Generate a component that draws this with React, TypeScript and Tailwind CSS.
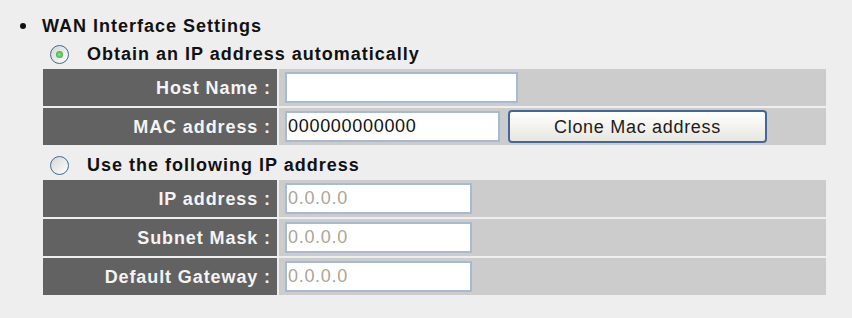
import React from "react";

type Row = {
  label: string;
  value?: string;
  width: string;
  muted?: boolean;
  button?: string;
};

const dhcpRows: Row[] = [
  { label: "Host Name :", value: "", width: "w-[233px]" },
  { label: "MAC address :", value: "000000000000", width: "w-[215px]", button: "Clone Mac address" },
];

const staticRows: Row[] = [
  { label: "IP address :", value: "0.0.0.0", width: "w-[187px]", muted: true },
  { label: "Subnet Mask :", value: "0.0.0.0", width: "w-[187px]", muted: true },
  { label: "Default Gateway :", value: "0.0.0.0", width: "w-[187px]", muted: true },
];

const Radio = ({ checked }: { checked: boolean }) => (
  <span className="flex h-[19px] w-[19px] items-center justify-center rounded-full border-[1.5px] border-[#3b6b9c] bg-linear-to-br from-[#d6d6d0] to-white">
    {checked && (
      <span className="h-[7px] w-[7px] rounded-full bg-[radial-gradient(circle,#8eea8e_0%,#1f9e2a_100%)]" />
    )}
  </span>
);

const SettingsTable = ({ rows }: { rows: Row[] }) => (
  <div className="ml-[43px] flex w-[783px] flex-col gap-[2px]">
    {rows.map((row) => (
      <div key={row.label} className="flex h-[37px] gap-[2px]">
        <div className="flex w-[234px] items-center justify-end bg-[#626262] pr-[6px] font-bold tracking-[0.9px] text-[#f4f4f4]">
          {row.label}
        </div>
        <div className="flex flex-1 items-center gap-[8px] bg-[#cccccc] pl-[6px]">
          <input
            readOnly
            value={row.value}
            className={`${row.width} h-[31px] border-2 border-[#a7bad2] bg-white pl-[1px] text-[18px] tracking-[0.7px] outline-none ${
              row.muted ? "text-[#aca597]" : "text-[#111]"
            }`}
          />
          {row.button && (
            <button className="h-[33px] w-[259px] rounded-[4px] border-2 border-[#44679a] bg-linear-to-b from-white to-[#e7e6df] text-[18px] font-normal tracking-[0.7px] text-[#1c1c1c]">
              {row.button}
            </button>
          )}
        </div>
      </div>
    ))}
  </div>
);

export default function App() {
  return (
    <div className="h-[318px] w-[852px] overflow-hidden bg-[#eeeeee] font-['Liberation_Sans',Arial,sans-serif] text-[18px] leading-[20px] text-[#111]">
      <div className="mt-[16px] flex items-center">
        <span className="ml-[20px] h-[6px] w-[6px] rounded-full bg-[#111]" />
        <span className="ml-[16px] font-bold tracking-[1px]">WAN Interface Settings</span>
      </div>

      <div className="mt-[8px] flex items-center">
        <span className="ml-[50px]">
          <Radio checked />
        </span>
        <span className="ml-[18px] font-bold tracking-[1px]">Obtain an IP address automatically</span>
      </div>

      <div className="mt-[5px]">
        <SettingsTable rows={dhcpRows} />
      </div>

      <div className="mt-[10px] flex items-center">
        <span className="ml-[50px]">
          <Radio checked={false} />
        </span>
        <span className="ml-[18px] font-bold tracking-[1px]">Use the following IP address</span>
      </div>

      <div className="mt-[5px]">
        <SettingsTable rows={staticRows} />
      </div>
    </div>
  );
}
